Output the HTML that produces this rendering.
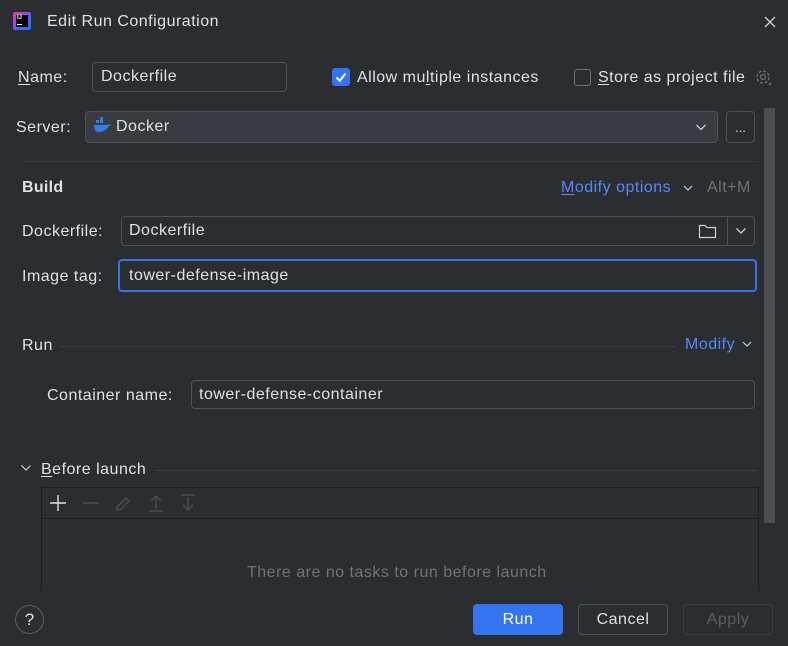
<!DOCTYPE html>
<html><head><meta charset="utf-8"><style>
*{box-sizing:border-box;margin:0;padding:0}
body{width:788px;height:646px;background:#2b2d30;color:#dfe1e5;font-family:"Liberation Sans",sans-serif;font-size:16px;letter-spacing:0.5px;position:relative;overflow:hidden}
.a{position:absolute;white-space:nowrap}
.t{line-height:18px}
.in{position:absolute;border:1px solid #4e5157;border-radius:4px;padding-left:8px;display:flex;align-items:center}
.u{text-decoration:underline;text-underline-offset:2px}
.line{position:absolute;height:1px;background:#393b40}
.btn{position:absolute;border-radius:4px;display:flex;align-items:center;justify-content:center;height:31px;width:90px}
</style></head><body>
<div class="a" style="left:13px;top:12px;width:18px;height:18px;border-radius:2px;background:linear-gradient(135deg,#ff318c,#6b57ff 50%,#087cfa)"></div>
<div class="a" style="left:16px;top:15px;width:12px;height:12px;background:#000;color:#fff;font-size:6px;font-weight:bold;line-height:7px;padding-left:1px;letter-spacing:0">IJ<div style="width:5px;height:1px;background:#fff;margin-top:2px"></div></div>
<div class="a t" style="left:47px;top:13px">Edit Run Configuration</div>
<svg class="a" style="left:763px;top:15px" width="14" height="14"><path d="M2 2L12 12M12 2L2 12" stroke="#ced0d6" stroke-width="1.3"/></svg>

<div class="a t" style="left:18px;top:69px"><span class="u">N</span>ame:</div>
<div class="in" style="left:92px;top:62px;width:195px;height:30px">Dockerfile</div>
<div class="a" style="left:332px;top:68px;width:18px;height:18px;border-radius:3px;background:#3574f0"></div>
<svg class="a" style="left:332px;top:68px" width="18" height="18"><path d="M4.5 9.5L7.8 12.8L13.5 5.5" stroke="#fff" stroke-width="2" fill="none"/></svg>
<div class="a t" style="left:357px;top:69px">Allow mu<span class="u">l</span>tiple instances</div>
<div class="a" style="left:574px;top:69px;width:17px;height:17px;border-radius:3px;border:1px solid #6f737a"></div>
<div class="a t" style="left:598px;top:69px"><span class="u">S</span>tore as project file</div>
<svg class="a" style="left:754px;top:68px" width="20" height="20"><circle cx="9" cy="9" r="6" stroke="#6f737a" stroke-width="1.3" fill="none" stroke-dasharray="3 1.7"/><circle cx="9" cy="9" r="2.5" stroke="#6f737a" stroke-width="1.2" fill="none"/><path d="M14 17L17 14V17Z" fill="#6f737a"/></svg>

<div class="a t" style="left:16px;top:119px">Server:</div>
<div class="in" style="left:85px;top:111px;width:633px;height:32px;background:#393b40;padding-left:30px">Docker</div>
<svg class="a" style="left:93px;top:117px" width="18" height="18"><rect x="3" y="3" width="3" height="3" fill="#2f7fe6"/><rect x="7" y="3" width="3" height="3" fill="#2f7fe6"/><rect x="7" y="0" width="3" height="3" fill="#2f7fe6"/><path d="M1 8H15C16 7 17 7 18 7.5C17 9 16 9 15.5 9C14 13 10 15 6 15C2 15 1 12 1 8Z" fill="#2f7fe6"/></svg>
<svg class="a" style="left:695px;top:122px" width="12" height="10"><path d="M1.5 3L6 7.5L10.5 3" stroke="#ced0d6" stroke-width="1.3" fill="none"/></svg>
<div class="in" style="left:726px;top:111px;width:29px;height:32px;padding:0;justify-content:center;font-size:13px;line-height:1;letter-spacing:0">...</div>
<div class="a" style="left:764px;top:108px;width:11px;height:415px;background:#4b4d51"></div>

<div class="line" style="left:22px;top:161px;width:736px"></div>

<div class="a t" style="left:22px;top:179px;font-weight:bold;letter-spacing:0.3px">Build</div>
<div class="a t" style="left:561px;top:179px;color:#548af7"><span class="u">M</span>odify options</div>
<svg class="a" style="left:682px;top:183px" width="12" height="10"><path d="M2 3L6 7L10 3" stroke="#ced0d6" stroke-width="1.2" fill="none"/></svg>
<div class="a t" style="left:707px;top:179px;color:#6f737a">Alt+M</div>

<div class="a t" style="left:22px;top:223px">Dockerfile:</div>
<div class="in" style="left:121px;top:216px;width:634px;height:30px;padding-left:7px">Dockerfile</div>
<div class="a" style="left:727px;top:217px;width:1px;height:28px;background:#4e5157"></div>
<svg class="a" style="left:698px;top:222px" width="20" height="18"><path d="M1.5 3.5H7L9 5.5H17.5V15.5H1.5Z" stroke="#ced0d6" stroke-width="1.2" fill="none"/></svg>
<svg class="a" style="left:735px;top:226px" width="12" height="10"><path d="M1.5 2.5L6 7L10.5 2.5" stroke="#ced0d6" stroke-width="1.3" fill="none"/></svg>

<div class="a t" style="left:22px;top:268px">Image tag:</div>
<div class="in" style="left:118px;top:259px;width:639px;height:33px;border:2px solid #3574f0;padding-left:9px">tower-defense-image</div>

<div class="a t" style="left:22px;top:337px">Run</div>
<div class="line" style="left:60px;top:346px;width:615px"></div>
<div class="a t" style="left:685px;top:336px;color:#548af7">Modify</div>
<svg class="a" style="left:741px;top:339px" width="12" height="10"><path d="M2 3L6 7L10 3" stroke="#ced0d6" stroke-width="1.2" fill="none"/></svg>

<div class="a t" style="left:47px;top:387px">Container name:</div>
<div class="in" style="left:191px;top:380px;width:564px;height:29px;padding-left:7px">tower-defense-container</div>

<svg class="a" style="left:20px;top:463px" width="12" height="10"><path d="M1.5 2.5L6 7L10.5 2.5" stroke="#ced0d6" stroke-width="1.2" fill="none"/></svg>
<div class="a t" style="left:41px;top:461px"><span class="u">B</span>efore launch</div>
<div class="line" style="left:155px;top:470px;width:603px;background:#3c3e42"></div>
<div class="a" style="left:41px;top:487px;width:718px;height:120px;border:1px solid #1e1f22;border-bottom:none"></div>
<div class="a" style="left:42px;top:518px;width:716px;height:1px;background:#1e1f22"></div>
<svg class="a" style="left:47px;top:492px" width="160" height="22">
<path d="M11 3V19M3 11H19" stroke="#dfe1e5" stroke-width="1.4"/>
<path d="M36 11H52" stroke="#4e5157" stroke-width="1.4"/>
<path d="M70 15L79 6L82 9L73 18H70Z" stroke="#4e5157" stroke-width="1.3" fill="none"/>
<path d="M102 19H116M109 17V5M104 9L109 4L114 9" stroke="#4e5157" stroke-width="1.3" fill="none"/>
<path d="M134 3H148M141 5V17M136 13L141 18L146 13" stroke="#4e5157" stroke-width="1.3" fill="none"/>
</svg>
<div class="a t" style="left:247px;top:564px;color:#6f737a">There are no tasks to run before launch</div>
<div class="a" style="left:0;top:590px;width:788px;height:56px;background:#2b2d30"></div>

<div class="a" style="left:15px;top:605px;width:29px;height:29px;border-radius:50%;border:1px solid #5a5d63;text-align:center;line-height:27px;font-size:17px;letter-spacing:0">?</div>
<div class="btn" style="left:473px;top:604px;background:#3574f0;color:#fff">Run</div>
<div class="btn" style="left:578px;top:604px;border:1px solid #4e5157">Cancel</div>
<div class="btn" style="left:683px;top:604px;border:1px solid #3c3e42;color:#5a5d63">Apply</div>
</body></html>
